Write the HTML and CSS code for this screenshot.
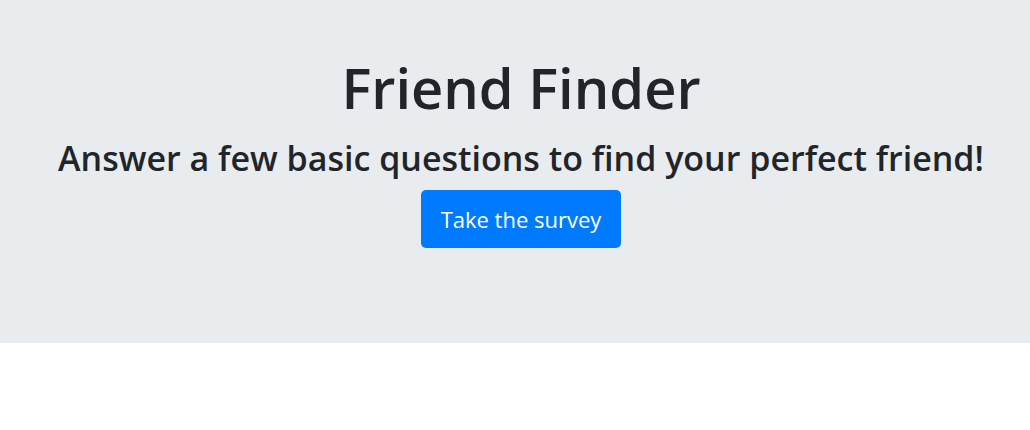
FILE: index.html
```html
<!DOCTYPE html>
<html lang="en">
<head>
<meta charset="utf-8">
<title>Friend Finder</title>
<link rel="stylesheet" href="styles.css">
</head>
<body>
<div class="jumbotron">
  <h1 class="title">Friend Finder</h1>
  <h2 class="lead">Answer a few basic questions to find your perfect friend!</h2>
  <a class="btn" href="#">Take the survey</a>
</div>
</body>
</html>
```
FILE: styles.css
```css
html, body {
  margin: 0;
  padding: 0;
  background: #fff;
  font-family: "Open Sans", "Noto Sans", sans-serif;
  color: #212529;
}
.jumbotron {
  background: #e9ecef;
  height: 343px;
  box-sizing: border-box;
  padding: 54px 0 0 12px;
  display: flex;
  flex-direction: column;
  align-items: center;
}
.title {
  margin: 0 0 17px;
  font-size: 56px;
  font-weight: 600;
  line-height: 1.2;
}
.lead {
  margin: 0;
  font-size: 34px;
  font-weight: 600;
  line-height: 1.2;
}
.btn {
  margin-top: 11px;
  display: inline-block;
  background: #007bff;
  color: #fff;
  text-decoration: none;
  font-size: 22px;
  line-height: 34px;
  padding: 12px 20px;
  border-radius: 5px;
}
```
